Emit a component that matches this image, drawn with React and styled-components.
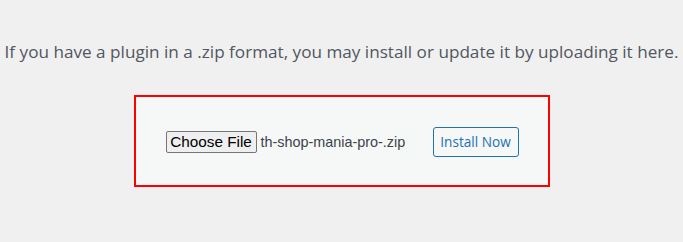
import React from 'react';
import styled, { createGlobalStyle } from 'styled-components';

const GlobalStyle = createGlobalStyle`
  html, body {
    margin: 0;
    padding: 0;
    background: #f0f0f1;
  }
  body {
    font-family: "Open Sans", "Noto Sans", sans-serif;
    color: #3c434a;
  }
`;

const Page = styled.div`
  padding-top: 37px;
  text-align: center;
`;

const Help = styled.p`
  margin: 0;
  font-size: 17.15px;
  line-height: 30px;
  color: #50575e;
  white-space: nowrap;
`;

const UploadForm = styled.form`
  box-sizing: border-box;
  display: inline-flex;
  align-items: center;
  width: 416px;
  height: 92px;
  margin-top: 28px;
  padding: 2px 30px 0;
  background: #f6f7f7;
  border: 2px solid #ff0000;
`;

const FileButton = styled.button`
  box-sizing: border-box;
  flex: none;
  height: 22px;
  width: 91px;
  padding: 0;
  margin: 0;
  background: #efefef;
  border: 1px solid #767676;
  border-radius: 2px;
  font-family: "Liberation Sans", Arial, sans-serif;
  font-size: 15.3px;
  line-height: 20px;
  color: #000;
  white-space: nowrap;
`;

const FileName = styled.span`
  flex: none;
  margin: 0 0 0 4px;
  font-family: "Liberation Sans", Arial, sans-serif;
  font-size: 14.4px;
  color: #3c434a;
  width: 145px;
  text-align: left;
  white-space: nowrap;
`;

const InstallButton = styled.button`
  box-sizing: border-box;
  flex: none;
  height: 30px;
  width: 86px;
  margin-left: 27px;
  padding: 0;
  background: #f6f7f7;
  border: 1px solid #2271b1;
  border-radius: 3px;
  font-family: "Open Sans", "Noto Sans", sans-serif;
  font-size: 13.6px;
  line-height: 28px;
  color: #2271b1;
  white-space: nowrap;
  cursor: pointer;
`;

export default function App() {
  return (
    <>
      <GlobalStyle />
      <Page>
        <Help>If you have a plugin in a .zip format, you may install or update it by uploading it here.</Help>
        <UploadForm onSubmit={(e) => e.preventDefault()}>
          <FileButton type="button">Choose File</FileButton>
          <FileName>th-shop-mania-pro-.zip</FileName>
          <InstallButton type="submit">Install Now</InstallButton>
        </UploadForm>
      </Page>
    </>
  );
}
